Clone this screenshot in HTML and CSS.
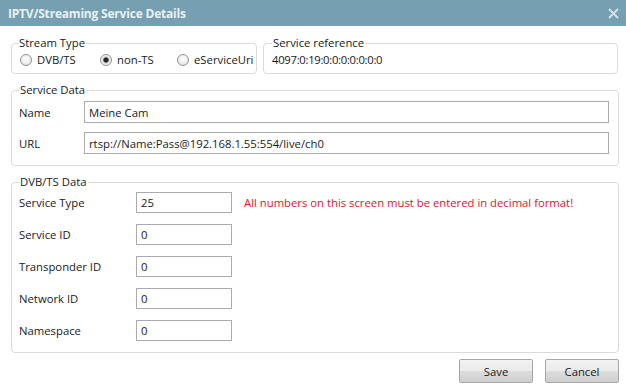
FILE: index.html
```html
<!DOCTYPE html>
<html lang="en">
<head>
    <meta charset="UTF-8">
    <title>IPTV/Streaming Service Details</title>
    <link rel="stylesheet" href="styles.css">
</head>
<body>

<div class="dialog">
    <div class="titlebar">
        <span class="title">IPTV/Streaming Service Details</span>
        <svg class="close" width="11" height="11" viewBox="0 0 11 11">
            <path d="M1 1 L10 10 M10 1 L1 10" stroke="#d3e0e6" stroke-width="2"/>
        </svg>
    </div>

    <div class="content">
        <div class="toprow">
            <fieldset class="group stream-type">
                <legend>Stream Type</legend>
                <label class="radio r1"><input type="radio" name="stype"> DVB/TS</label>
                <label class="radio r2"><input type="radio" name="stype" checked> non-TS</label>
                <label class="radio"><input type="radio" name="stype"> eServiceUri</label>
            </fieldset>
            <fieldset class="group service-ref">
                <legend>Service reference</legend>
                <div class="ref">4097:0:19:0:0:0:0:0:0:0</div>
            </fieldset>
        </div>

        <!-- Service Data -->
        <fieldset class="group service-data">
            <legend>Service Data</legend>
            <div class="row">
                <span class="label short">Name</span>
                <input class="field wide" type="text" value="Meine Cam">
            </div>
            <div class="row">
                <span class="label short">URL</span>
                <input class="field wide" type="text" value="rtsp://Name:Pass@192.168.1.55:554/live/ch0">
            </div>
        </fieldset>

        <!-- DVB/TS Data -->
        <fieldset class="group dvb-data">
            <legend>DVB/TS Data</legend>
            <div class="row">
                <span class="label">Service Type</span>
                <input class="field small" type="text" value="25">
                <span class="warning">All numbers on this screen must be entered in decimal format!</span>
            </div>
            <div class="row">
                <span class="label">Service ID</span>
                <input class="field small" type="text" value="0">
            </div>
            <div class="row">
                <span class="label">Transponder ID</span>
                <input class="field small" type="text" value="0">
            </div>
            <div class="row">
                <span class="label">Network ID</span>
                <input class="field small" type="text" value="0">
            </div>
            <div class="row">
                <span class="label">Namespace</span>
                <input class="field small" type="text" value="0">
            </div>
        </fieldset>

        <div class="buttons">
            <button class="btn">Save</button>
            <button class="btn">Cancel</button>
        </div>
    </div>
</div>

</body>
</html>
```

FILE: styles.css
```css
body {
    margin: 0;
    font-family: "Open Sans", "Noto Sans", sans-serif;
    font-size: 11.3px;
    color: #1a1a1a;
    background-color: #fff;
}

.dialog {
    width: 626px;
    height: 392px;
    overflow: hidden;
}

.titlebar {
    height: 26px;
    background-color: #76a0b1;
    display: flex;
    align-items: center;
    justify-content: space-between;
    padding: 0 6px 0 8px;
}

.title {
    color: #e9f0f3;
    font-weight: bold;
    font-size: 12px;
    letter-spacing: -0.2px;
}

.close {
    margin-right: 1px;
}

.content {
    padding: 10px 8px 0 11px;
}

.toprow {
    display: flex;
    gap: 6px;
}

.group {
    margin: 0;
    border: 1px solid #dadada;
    border-radius: 4px;
    padding: 0 8px 0 7px;
    min-width: 0;
    box-sizing: border-box;
}

.group legend {
    padding: 0 1px;
    line-height: 14px;
    height: 14px;
}

.stream-type {
    width: 246px;
    height: 38px;
    display: flex;
    padding: 3px 0 0 8px;
}

.stream-type legend {
    margin-left: -2px;
}

.radio {
    display: flex;
    align-items: center;
    gap: 5px;
    line-height: 14px;
    height: 14px;
    white-space: nowrap;
}

.radio.r1 {
    width: 80px;
}

.radio.r2 {
    width: 77px;
}

.radio input {
    appearance: none;
    margin: 0;
    width: 12px;
    height: 12px;
    border: 1px solid #8f9396;
    border-radius: 50%;
    background: radial-gradient(circle at 50% 40%, #fff 0, #e8e8e8 70%, #d2d2d2 100%);
}

.radio input:checked {
    background: radial-gradient(circle, #202020 0, #2a2a2a 2px, #bcbcbc 3px, #f4f4f4 4px, #dcdcdc 100%);
}

.service-ref {
    flex: 1;
    height: 38px;
    padding: 3px 8px 0 8px;
}

.ref {
    line-height: 14px;
    letter-spacing: -0.3px;
}

.service-data {
    margin-top: 9px;
    height: 83px;
    width: 608px;
    padding-top: 4px;
}

.dvb-data {
    margin-top: 9px;
    height: 178px;
    width: 608px;
    padding-top: 3px;
}

.row {
    display: flex;
    align-items: center;
    height: 22px;
    margin-bottom: 9px;
}

.dvb-data .row {
    height: 21px;
    margin-bottom: 11px;
}

.label {
    width: 117px;
    flex-shrink: 0;
}

.label.short {
    width: 65px;
}

.field {
    font-family: inherit;
    font-size: 11.3px;
    color: #1a1a1a;
    border: 1px solid #ababab;
    height: 22px;
    box-sizing: border-box;
    padding: 0 4px;
    margin: 0;
    outline: none;
}

.dvb-data .field {
    height: 21px;
}

.field.wide {
    width: 525px;
}

.field.small {
    width: 96px;
}

.warning {
    color: #e2142d;
    margin-left: 12px;
}

.buttons {
    display: flex;
    justify-content: flex-end;
    gap: 12px;
    margin-top: 6px;
    width: 608px;
}

.btn {
    width: 74px;
    height: 24px;
    font-family: inherit;
    font-size: 11.3px;
    color: #1a1a1a;
    border: 1px solid #a7a7a7;
    border-radius: 2px;
    background: linear-gradient(#f2f2f2, #ebebeb 50%, #dddddd 51%, #cfcfcf);
    cursor: pointer;
}
```
